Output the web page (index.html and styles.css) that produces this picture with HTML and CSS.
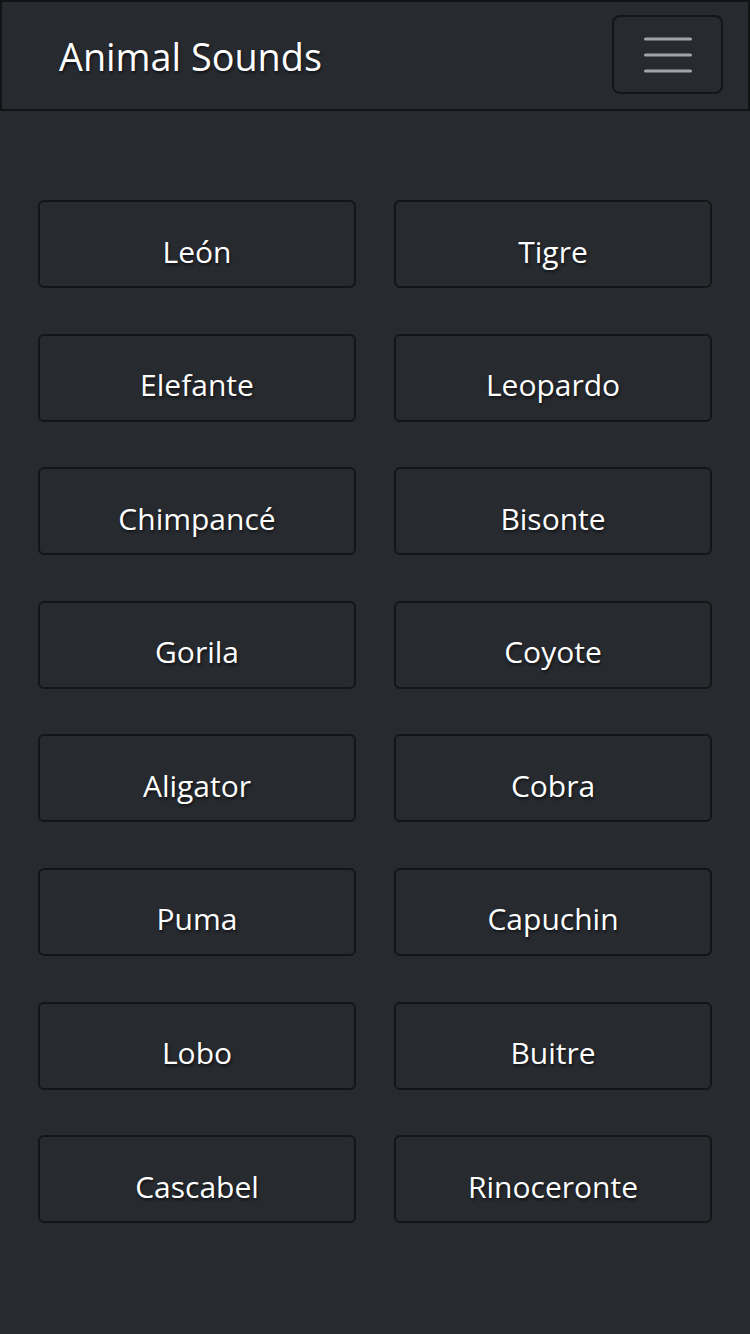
FILE: index.html
```html
<!DOCTYPE html>
<html lang="es">
<head>
<meta charset="utf-8">
<title>Animal Sounds</title>
<link rel="stylesheet" href="styles.css">
</head>
<body>
<header class="navbar">
  <h1 class="brand">Animal Sounds</h1>
  <button class="toggler" aria-label="Menu">
    <svg width="48" height="36" viewBox="0 0 48 36">
      <g stroke="#a3a4a8" stroke-width="3" stroke-linecap="round">
        <line x1="1.5" y1="2" x2="46.5" y2="2"/>
        <line x1="1.5" y1="18" x2="46.5" y2="18"/>
        <line x1="1.5" y1="34" x2="46.5" y2="34"/>
      </g>
    </svg>
  </button>
</header>
<main class="grid">
  <button class="animal">León</button>
  <button class="animal">Tigre</button>
  <button class="animal">Elefante</button>
  <button class="animal">Leopardo</button>
  <button class="animal">Chimpancé</button>
  <button class="animal">Bisonte</button>
  <button class="animal">Gorila</button>
  <button class="animal">Coyote</button>
  <button class="animal">Aligator</button>
  <button class="animal">Cobra</button>
  <button class="animal">Puma</button>
  <button class="animal">Capuchin</button>
  <button class="animal">Lobo</button>
  <button class="animal">Buitre</button>
  <button class="animal">Cascabel</button>
  <button class="animal">Rinoceronte</button>
</main>
</body>
</html>
```
FILE: styles.css
```css
* { box-sizing: border-box; }
html, body {
  margin: 0;
  padding: 0;
  background: #272a2f;
  height: 100%;
}
body {
  font-family: "Open Sans", "Noto Sans", sans-serif;
  color: #ffffff;
}
.navbar {
  height: 111px;
  border: 2px solid #121315;
  display: flex;
  align-items: center;
  justify-content: space-between;
  padding: 0 25px 0 57px;
}
.brand {
  margin: 0;
  font-weight: 400;
  font-size: 37.8px;
  color: #ffffff;
  text-shadow: 1px 2px 3px rgba(0, 0, 0, 0.6);
  line-height: 1;
  padding-top: 2px;
}
.toggler {
  width: 111px;
  height: 79px;
  border: 2px solid #141517;
  border-radius: 8px;
  background: transparent;
  display: flex;
  align-items: center;
  justify-content: center;
  padding: 0;
  margin-top: -2px;
}
.toggler svg { display: block; }
.grid {
  display: grid;
  grid-template-columns: 318px 318px;
  column-gap: 38px;
  row-gap: 45.6px;
  padding: 89px 38px 0 38px;
}
.animal {
  height: 88px;
  border: 2px solid #141517;
  border-radius: 6px;
  background: transparent;
  color: #ffffff;
  font-family: "Open Sans", "Noto Sans", sans-serif;
  font-size: 30px;
  padding: 14px 0 0 0;
  text-shadow: 1px 2px 3px rgba(0, 0, 0, 0.6);
}
```
